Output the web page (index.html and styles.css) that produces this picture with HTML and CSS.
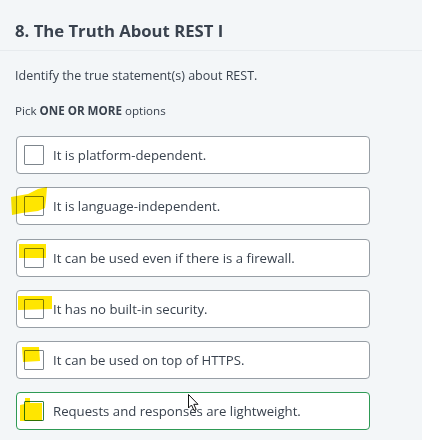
FILE: index.html
```html
<!DOCTYPE html>
<html>
<head>
<meta charset="utf-8">
<link rel="stylesheet" href="styles.css">
</head>
<body>
<div class="page">
  <div class="header"><h1 class="title">8. The Truth About REST I</h1></div>
  <p class="question">Identify the true statement(s) about REST.</p>
  <p class="pick">Pick <b>ONE OR MORE</b> options</p>
  <div class="options">
    <label class="option"><span class="box"></span><span class="label">It is platform-dependent.</span></label>
    <label class="option"><span class="box"></span><span class="label">It is language-independent.</span></label>
    <label class="option"><span class="box"></span><span class="label">It can be used even if there is a firewall.</span></label>
    <label class="option"><span class="box"></span><span class="label">It has no built-in security.</span></label>
    <label class="option"><span class="box"></span><span class="label">It can be used on top of HTTPS.</span></label>
    <label class="option hover"><span class="box"></span><span class="label">Requests and responses are lightweight.</span></label>
  </div>
  <svg class="marks" width="422" height="440" viewBox="0 0 422 440">
    <polygon fill="#ffe600" points="11,197 28,194 38,189 47,187 46,200 45,208 38,211 22,213 12,215"/>
    <polygon fill="#ffe600" points="19,244 46,244 46,258 19,258"/>
    <polygon fill="#ffe600" points="18,296 52,296 52,309 18,310"/>
    <polygon fill="#ffe600" points="22,347 39,347 40,361 23,362"/>
    <polygon fill="#ffe600" points="25,398 30,398 30,403 42,403 42,421 20,421 20,405 25,404"/>
  </svg>
  <svg class="cursor" width="422" height="440" viewBox="0 0 422 440">
    <path d="M188.5 394.5 L188.5 408 L191.5 405 L194 410.5 L196.2 409.5 L193.8 404.3 L198 404.3 Z" fill="#fff" stroke="#111" stroke-width="1" stroke-linejoin="round"/>
  </svg>
</div>
</body>
</html>
```
FILE: styles.css
```css
* { box-sizing: border-box; }
html, body { margin: 0; padding: 0; }
body {
  background: #f3f6f8;
  font-family: "Open Sans", "Noto Sans", sans-serif;
  color: #39424e;
  width: 422px;
  height: 440px;
  overflow: hidden;
}
.page { position: relative; width: 422px; height: 440px; }
.header {
  padding: 20px 0 8px 15px;
  border-bottom: 1px solid #e7ebee;
}
.title {
  margin: 0;
  font-size: 16.7px;
  line-height: 22px;
  font-weight: 700;
  color: #39424e;
}
.question {
  margin: 16px 0 0 15px;
  font-size: 12.5px;
  line-height: 18px;
  color: #39424e;
}
.pick {
  margin: 18px 0 0 15px;
  font-size: 11.6px;
  line-height: 16px;
  color: #39424e;
}
.pick b { font-weight: 700; }
.options {
  margin: 17px 0 0 16px;
  width: 354px;
  display: flex;
  flex-direction: column;
  gap: 13.25px;
}
.option {
  display: flex;
  align-items: center;
  height: 38px;
  padding: 0 0 0 7px;
  background: #fff;
  border: 1px solid #979ea5;
  border-radius: 4px;
  font-size: 13.2px;
  color: #39424e;
}
.option .box {
  width: 20px;
  height: 20px;
  border: 1px solid #7d858c;
  border-radius: 1px;
  background: #fff;
  margin-right: 9px;
  flex: none;
}
.option.hover { border-color: #2e9a55; }
.option.hover .box { border-color: #2f7d4a; }
.marks {
  position: absolute;
  left: 0; top: 0;
  pointer-events: none;
  mix-blend-mode: multiply;
}
.cursor {
  position: absolute;
  left: 0; top: 0;
  pointer-events: none;
}
```
